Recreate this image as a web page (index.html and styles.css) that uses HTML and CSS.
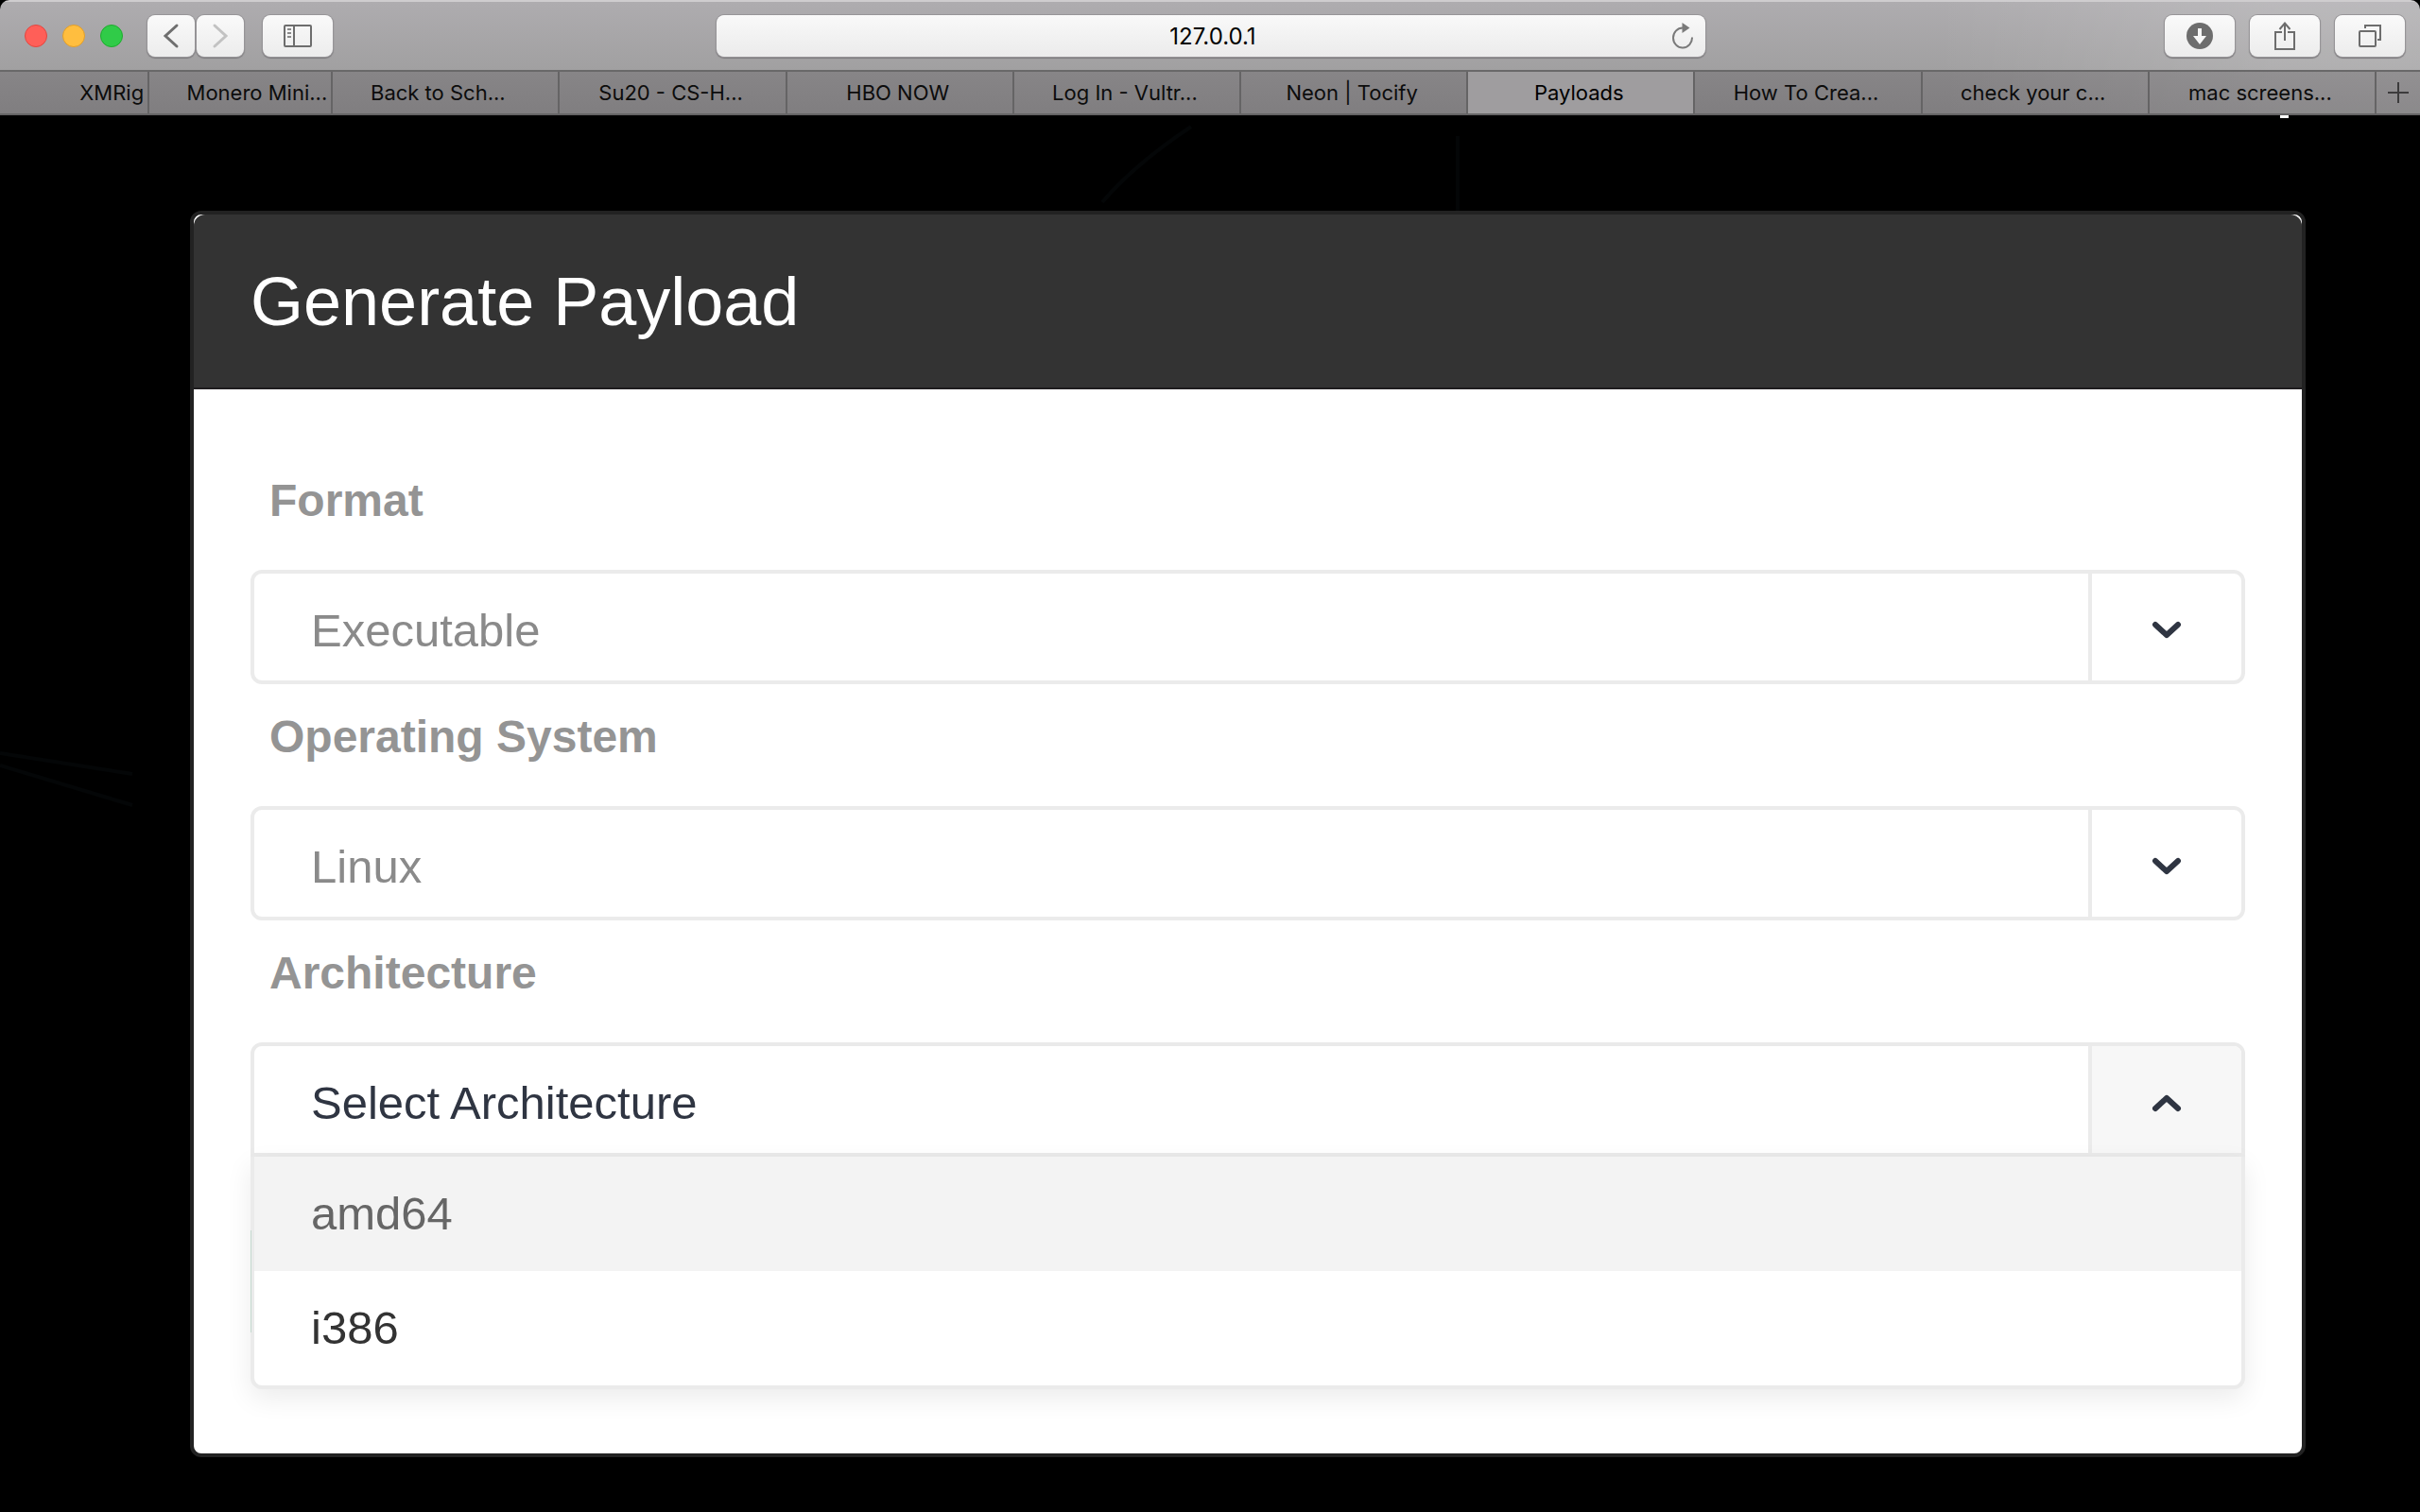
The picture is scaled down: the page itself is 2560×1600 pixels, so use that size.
FILE: index.html
```html
<!DOCTYPE html>
<html lang="en">
<head>
<meta charset="utf-8">
<title>Payloads</title>
<link rel="stylesheet" href="styles.css">
</head>
<body>
<div class="window">
  <header class="toolbar">
    <div class="toolbar-left">
      <div class="lights">
        <button class="light red" aria-label="Close"></button>
        <button class="light yellow" aria-label="Minimize"></button>
        <button class="light green" aria-label="Zoom"></button>
      </div>
      <div class="history">
        <button class="tool narrow" aria-label="Back"><svg width="20" height="28" viewBox="0 0 20 28"><path d="M16 3 4 14l12 11" fill="none" stroke="#6f6f6f" stroke-width="3" stroke-linecap="round"/></svg></button>
        <button class="tool narrow" aria-label="Forward" disabled><svg width="20" height="28" viewBox="0 0 20 28"><path d="M4 3l12 11L4 25" fill="none" stroke="#c2c2c2" stroke-width="3" stroke-linecap="round"/></svg></button>
      </div>
      <button class="tool" aria-label="Sidebar"><svg width="30" height="24" viewBox="0 0 30 24" fill="none" stroke="#6d6d6d" stroke-width="2"><rect x="1" y="1" width="28" height="22" rx="1"/><path d="M11 1v22"/><path d="M4 5h4M4 9h4M4 13h4" stroke="#8a8a8a"/></svg></button>
    </div>
    <div class="address">
      <input class="url" type="text" value="127.0.0.1" aria-label="Address">
      <button class="reload" aria-label="Reload"><svg width="24" height="28" viewBox="0 0 24 28"><path d="M22 15.500A10 10.500 0 1 1 12 5.500" fill="none" stroke="#7a7a7a" stroke-width="2"/><path d="M11.500 0v11l8-5.500z" fill="#7a7a7a"/></svg></button>
    </div>
    <div class="toolbar-right">
      <button class="tool" aria-label="Downloads"><svg width="28" height="28" viewBox="0 0 28 28"><circle cx="14" cy="14" r="14" fill="#6d6d6d"/><path d="M12 6h4v8h5l-7 9-7-9h5z" fill="#f6f6f6"/></svg></button>
      <button class="tool" aria-label="Share"><svg width="24" height="32" viewBox="0 0 24 32" fill="none" stroke="#6d6d6d" stroke-width="2"><path d="M9 12H2v18h20V12h-7"/><path d="M12 21V3M6.500 9 12 2.500 17.500 9"/></svg></button>
      <button class="tool" aria-label="Show all tabs"><svg width="26" height="26" viewBox="0 0 26 26" fill="none" stroke="#6d6d6d" stroke-width="2"><rect x="2" y="8" width="17" height="16" rx="1"/><path d="M8 5V2h16v15h-3"/></svg></button>
    </div>
  </header>
  <nav class="tabs">
    <a class="tab right" href="#">XMRig</a>
    <a class="tab right" href="#">Monero Mini...</a>
    <a class="tab third" href="#">Back to Sch...</a>
    <a class="tab" href="#">Su20 - CS-H...</a>
    <a class="tab" href="#">HBO NOW</a>
    <a class="tab" href="#">Log In - Vultr...</a>
    <a class="tab" href="#">Neon | Tocify</a>
    <a class="tab active" href="#">Payloads</a>
    <a class="tab" href="#">How To Crea...</a>
    <a class="tab" href="#">check your c...</a>
    <a class="tab" href="#">mac screens...</a>
    <button class="add" aria-label="New tab"><svg width="22" height="22" viewBox="0 0 22 22"><path d="M11 0v22M0 11h22" stroke="#3c3b3c" stroke-width="2"/></svg></button>
  </nav>
  <main class="page">
    <svg class="backdrop" viewBox="0 0 2560 1478" preserveAspectRatio="none" aria-hidden="true"><path d="M0 675l140 22M0 688l140 42M1260 12q-60 40-94 80M1542 22v80" fill="none" stroke="#040607" stroke-width="4"/></svg>
    <span class="caret"></span>
    <section class="card">
      <h1 class="card-title">Generate Payload</h1>
      <form class="card-body">
        <div class="field">
          <label class="label" for="format">Format</label>
          <div class="control">
            <select class="select" id="format"><option>Executable</option></select>
            <span class="toggle"><svg width="32" height="20" viewBox="0 0 32 20"><path d="M4 4l12 11L28 4" fill="none" stroke="#2f3542" stroke-width="6" stroke-linecap="round" stroke-linejoin="round"/></svg></span>
          </div>
        </div>
        <div class="field">
          <label class="label" for="os">Operating System</label>
          <div class="control">
            <select class="select" id="os"><option>Linux</option></select>
            <span class="toggle"><svg width="32" height="20" viewBox="0 0 32 20"><path d="M4 4l12 11L28 4" fill="none" stroke="#2f3542" stroke-width="6" stroke-linecap="round" stroke-linejoin="round"/></svg></span>
          </div>
        </div>
        <div class="field">
          <label class="label" for="arch">Architecture</label>
          <div class="control open">
            <select class="select" id="arch"><option>Select Architecture</option></select>
            <span class="toggle"><svg width="32" height="20" viewBox="0 0 32 20"><path d="M4 16L16 5l12 11" fill="none" stroke="#2f3542" stroke-width="6" stroke-linecap="round" stroke-linejoin="round"/></svg></span>
            <ul class="menu" role="listbox" aria-label="Architecture">
              <li class="option hover" role="option">amd64</li>
              <li class="option" role="option">i386</li>
            </ul>
          </div>
        </div>
      </form>
    </section>
  </main>
</div>
</body>
</html>
```
FILE: styles.css
```css
* { box-sizing: border-box; }

body {
  margin: 0;
  background: #000;
  font-family: "Liberation Sans", Arial, sans-serif;
}

button { border: 0; padding: 0; font: inherit; }
svg { display: block; }

.window {
  display: flex;
  flex-direction: column;
  min-height: 100vh;
  border-radius: 10px;
  overflow: hidden;
}

/* Browser toolbar */
.toolbar {
  display: grid;
  grid-template-columns: 1fr minmax(200px, 1046px) 1fr;
  align-items: center;
  height: 76px;
  padding: 0 16px 0 18px;
  border-top: 2px solid #cfcdcf;
  border-bottom: 2px solid #696869;
  background:
    linear-gradient(90deg, transparent 80%, rgba(255, 255, 255, .16) 94%),
    linear-gradient(#aeacaf, #a1a0a1);
  font-family: Inter, sans-serif;
}

.toolbar-left, .toolbar-right, .lights, .history { display: flex; align-items: center; }
.toolbar-left { gap: 20px; }
.toolbar-right { gap: 16px; justify-content: flex-end; }
.lights { gap: 16px; padding: 0 6px 0 8px; }
.history { gap: 2px; }

.light { width: 24px; height: 24px; border-radius: 50%; border: 1px solid; }
.red { background: #ff5f58; border-color: #e2463f; }
.yellow { background: #ffbe3f; border-color: #e09e2b; }
.green { background: #30cb48; border-color: #1dac2c; }

.tool {
  display: flex;
  align-items: center;
  justify-content: center;
  width: 74px;
  height: 44px;
  border-radius: 8px;
  background: linear-gradient(#fafafa, #ececec);
  box-shadow: 0 0 0 1px #979598, 0 1px 1px 1px #7d7b7e;
}
.narrow { width: 50px; }

.address {
  display: grid;
  grid-template-columns: 28px 1fr 24px;
  align-items: center;
  height: 44px;
  padding: 0 12px;
  border-radius: 8px;
  background: linear-gradient(#f9f9f9, #ebebeb);
  box-shadow: 0 0 0 1px #979598, 0 1px 1px 1px #7d7b7e;
}
.url {
  grid-column: 2;
  width: 100%;
  border: 0;
  padding: 2px 0 0;
  background: none;
  font: 24px/32px Inter, sans-serif;
  color: #000;
  text-align: center;
}
.reload { background: none; }

/* Tab strip */
.tabs {
  display: grid;
  grid-template-columns: minmax(0, 158fr) minmax(0, 194fr) repeat(9, minmax(0, 240fr)) 46px;
  height: 46px;
  border-bottom: 2px solid #656465;
  background:
    linear-gradient(90deg, transparent 80%, rgba(255, 255, 255, .09) 94%),
    linear-gradient(#878587, #807e80);
  font: 22px/44px Inter, sans-serif;
}
.tab {
  padding-right: 4px;
  border-right: 2px solid #656465;
  overflow: hidden;
  white-space: nowrap;
  color: #0c0c0c;
  text-align: center;
  text-decoration: none;
}
.right { text-align: right; }
.third { padding-right: 16px; }
.active { background: #9f9d9f; color: #000; }
.add {
  display: flex;
  align-items: center;
  justify-content: center;
  background: none;
}

/* Page */
.page {
  position: relative;
  flex: 1;
  padding: 101px 121px 58px 201px;
  background: #000;
}
.backdrop { position: absolute; inset: 0; width: 100%; height: 100%; }
.caret {
  position: absolute;
  top: 0;
  right: 139px;
  width: 9px;
  height: 3px;
  background: #fff;
}

.card {
  position: relative;
  border: 4px solid #222;
  border-radius: 12px;
  background: #fff;
}
.card-title {
  margin: 0;
  padding: 52px 60px 51px;
  border-bottom: 2px solid #1f1d1f;
  border-radius: 12px 12px 0 0;
  background: #333;
  color: #fff;
  font-size: 72px;
  font-weight: 400;
  line-height: 80px;
}
.card-body {
  display: flex;
  flex-direction: column;
  gap: 28px;
  padding: 90px 60px 314px;
  font-size: 48px;
  line-height: 56px;
}
.field { display: flex; flex-direction: column; gap: 45px; }
.label { padding-left: 20px; color: #949494; font-weight: 700; }

.control {
  position: relative;
  display: flex;
  height: 121px;
  border: 4px solid #ebebeb;
  border-radius: 12px;
  background: #fff;
  font-size: 49px;
}
.select {
  flex: 1;
  min-width: 0;
  appearance: none;
  border: 0;
  padding: 6px 60px 0;
  background: none;
  color: #8a8a8a;
  font: inherit;
}
.toggle {
  display: flex;
  align-items: center;
  justify-content: center;
  width: 162px;
  padding-top: 6px;
  border-left: 4px solid #ebebeb;
}

.open { border-radius: 12px 12px 0 0; border-color: #eaeaea; }
.open .select { color: #2f3542; }
.open .toggle { background: #f7f7f7; border-radius: 0 8px 0 0; }

.menu {
  position: absolute;
  top: 100%;
  left: -4px;
  right: -4px;
  margin: 4px 0 0;
  padding: 0;
  list-style: none;
  border: 4px solid #ebebeb;
  border-top: 0;
  border-radius: 0 0 12px 12px;
  background: #fff;
  box-shadow: 0 10px 28px rgba(0, 0, 0, .08);
}
.menu::before {
  content: "";
  position: absolute;
  top: 78px;
  left: -4px;
  width: 1px;
  height: 108px;
  background: #c3d8ce;
}
.option { padding: 32px 60px 33px; color: #333; }
.hover { background: #f3f3f3; color: #666; }
```
